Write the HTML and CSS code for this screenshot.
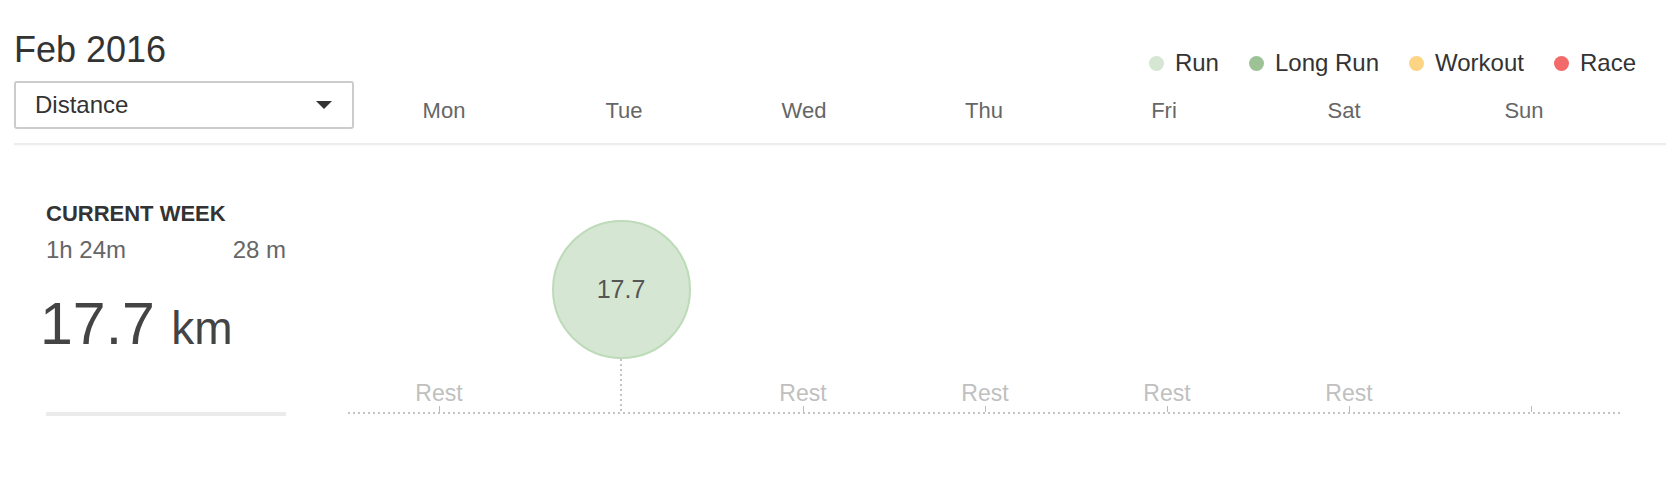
FILE: index.html
```html
<!DOCTYPE html>
<html lang="en">
<head>
    <meta charset="utf-8" />
    <meta name="viewport" content="width=device-width, initial-scale=1.0" />
    <title>Training Calendar</title>
    <link rel="stylesheet" href="styles.css">
</head>
<body>
    <div class="page">
        <header class="top">
            <div class="top-left">
                <h1 class="month">Feb 2016</h1>
                <div class="select">Distance<span class="caret"></span></div>
            </div>
            <div class="top-right">
                <ul class="legend">
                    <li><span class="dot run"></span>Run</li>
                    <li><span class="dot long-run"></span>Long Run</li>
                    <li><span class="dot workout"></span>Workout</li>
                    <li><span class="dot race"></span>Race</li>
                </ul>
                <div class="days">
                    <span>Mon</span>
                    <span>Tue</span>
                    <span>Wed</span>
                    <span>Thu</span>
                    <span>Fri</span>
                    <span>Sat</span>
                    <span>Sun</span>
                </div>
            </div>
        </header>

        <section class="week">
            <div class="summary">
                <h3 class="summary-title">CURRENT WEEK</h3>
                <div class="summary-meta">
                    <span>1h 24m</span>
                    <span>28 m</span>
                </div>
                <p class="total">17.7 <span class="unit">km</span></p>
                <div class="bar"></div>
            </div>

            <div class="chart">
                <div class="day">
                    <span class="rest">Rest</span>
                    <span class="tick"></span>
                </div>
                <div class="day">
                    <div class="bubble run">17.7</div>
                    <span class="stem"></span>
                </div>
                <div class="day">
                    <span class="rest">Rest</span>
                    <span class="tick"></span>
                </div>
                <div class="day">
                    <span class="rest">Rest</span>
                    <span class="tick"></span>
                </div>
                <div class="day">
                    <span class="rest">Rest</span>
                    <span class="tick"></span>
                </div>
                <div class="day">
                    <span class="rest">Rest</span>
                    <span class="tick"></span>
                </div>
                <div class="day">
                    <span class="tick"></span>
                </div>
            </div>
        </section>
    </div>
</body>
</html>
```

FILE: styles.css
```css
* {
    margin: 0;
    padding: 0;
    box-sizing: border-box;
}
body {
    font-family: "Liberation Sans", Helvetica, Arial, sans-serif;
    color: #333333;
    background-color: #ffffff;
}
.page {
    padding: 0 14px;
}

/* Header */
.top {
    display: flex;
    padding: 30px 0 14px 0;
    border-bottom: 2px solid #ececec;
    box-shadow: 0 2px 3px rgba(0, 0, 0, 0.02);
}
.top-left {
    width: 340px;
}
.month {
    font-size: 36px;
    line-height: 40px;
    font-weight: normal;
    color: #333333;
}
.select {
    display: flex;
    align-items: center;
    justify-content: space-between;
    height: 48px;
    margin-top: 11px;
    padding: 0 20px 0 19px;
    border: 2px solid #cccccc;
    border-radius: 3px;
    font-size: 24px;
    color: #333333;
}
.caret {
    width: 0;
    height: 0;
    border-left: 8px solid transparent;
    border-right: 8px solid transparent;
    border-top: 8px solid #333333;
}
.top-right {
    flex: 1;
    display: flex;
    flex-direction: column;
}
.legend {
    display: flex;
    justify-content: flex-end;
    gap: 30px;
    margin: 20px 30px 0 0;
    list-style: none;
    font-size: 24px;
    line-height: 26px;
    color: #333333;
}
.legend li {
    display: flex;
    align-items: center;
    gap: 11px;
}
.dot {
    width: 15px;
    height: 15px;
    border-radius: 50%;
}
.dot.run {
    background-color: #d5e6d3;
}
.dot.long-run {
    background-color: #9cc296;
}
.dot.workout {
    background-color: #fdd384;
}
.dot.race {
    background-color: #f26a6a;
}
.days {
    display: grid;
    grid-template-columns: repeat(7, 180px);
    margin-top: 22px;
    font-size: 22px;
    line-height: 26px;
    color: #666666;
    text-align: center;
}

/* Week row */
.week {
    display: flex;
    padding-top: 57px;
}
.summary {
    width: 240px;
    margin-left: 32px;
}
.summary-title {
    font-size: 22px;
    line-height: 24px;
    font-weight: bold;
    color: #333333;
}
.summary-meta {
    display: flex;
    justify-content: space-between;
    margin-top: 11px;
    font-size: 24px;
    line-height: 26px;
    color: #666666;
}
.total {
    margin: 31px 0 0 -6px;
    font-size: 59px;
    line-height: 60px;
    color: #444444;
}
.total .unit {
    font-size: 46px;
    line-height: 1;
}
.bar {
    height: 4px;
    margin-top: 58px;
    background-color: #ebebeb;
}

/* Chart */
.chart {
    display: grid;
    grid-template-columns: repeat(7, 182px);
    align-items: end;
    height: 212px;
    margin-left: 62px;
    padding-bottom: 2px;
    background: repeating-linear-gradient(to right, #c4c4c4 0 2px, transparent 2px 5px) left bottom / 100% 2px no-repeat;
}
.day {
    display: flex;
    flex-direction: column;
    align-items: center;
}
.rest {
    font-size: 23px;
    line-height: 26px;
    color: #c0c0c0;
}
.tick {
    width: 1px;
    height: 6px;
    background-color: #bbbbbb;
}
.bubble {
    display: flex;
    align-items: center;
    justify-content: center;
    width: 139px;
    height: 139px;
    border-radius: 50%;
    font-size: 25px;
    color: #555555;
}
.bubble.run {
    background-color: #d5e6d3;
    border: 2px solid #bddbb8;
}
.stem {
    width: 2px;
    height: 53px;
    background: repeating-linear-gradient(to bottom, #c4c4c4 0 2px, transparent 2px 5px);
}
```
